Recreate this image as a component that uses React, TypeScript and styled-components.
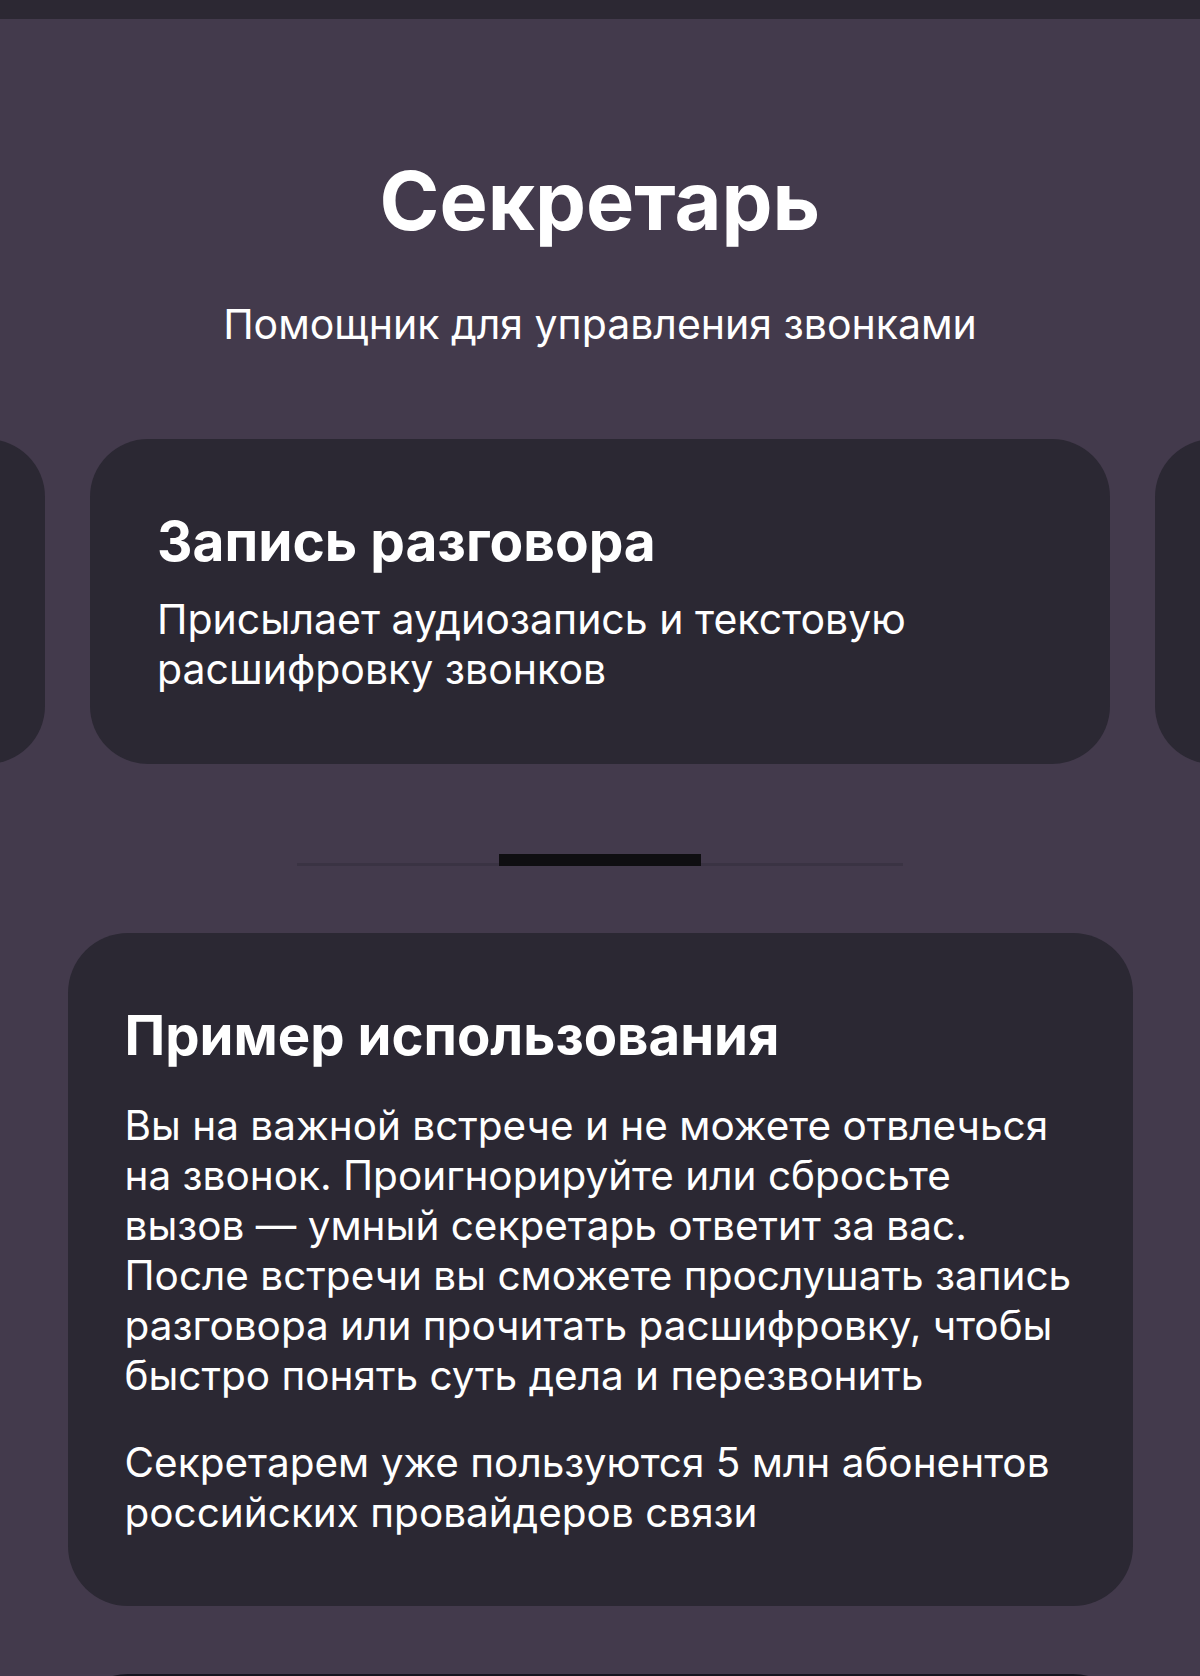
import React from "react";
import styled, { createGlobalStyle } from "styled-components";

const COLORS = {
  page: "#433a4c",
  topBar: "#2c2833",
  card: "#2b2833",
  nextCard: "#15141f",
  track: "#3a3343",
  thumb: "#0f0e11",
  text: "#ffffff",
};

const GlobalStyle = createGlobalStyle`
  html, body {
    margin: 0;
    padding: 0;
    background: ${COLORS.page};
  }
  body {
    font-family: "Inter", "Noto Sans", "Liberation Sans", sans-serif;
    color: ${COLORS.text};
    -webkit-font-smoothing: antialiased;
  }
`;

/* Page */
const Page = styled.div`
  width: 1200px;
  height: 1676px;
  overflow: hidden;
  background: ${COLORS.page};
  display: flex;
  flex-direction: column;
  align-items: center;

  & > * {
    flex-shrink: 0;
  }
`;

const TopBar = styled.div`
  width: 100%;
  height: 19px;
  background: ${COLORS.topBar};
`;

/* Header */
const Header = styled.header`
  display: flex;
  flex-direction: column;
  align-items: center;
  padding-top: 134px;
`;

const Title = styled.h1`
  margin: 0;
  font-size: 81px;
  line-height: 96px;
  font-weight: 700;
`;

const Subtitle = styled.p`
  margin: 51px 0 0;
  font-size: 41px;
  line-height: 48px;
  font-weight: 400;
`;

/* Carousel */
const Carousel = styled.section`
  width: 100%;
  margin-top: 91px;
  display: flex;
  justify-content: center;
  gap: 45px;
  overflow: hidden;
`;

const Slide = styled.div`
  flex: 0 0 1020px;
  height: 325px;
  box-sizing: border-box;
  padding: 70px 70px 0 67px;
  border-radius: 58px;
  background: ${COLORS.card};
`;

const CardTitle = styled.h2<{ $size?: number }>`
  margin: 0;
  font-size: ${(p) => p.$size ?? 55}px;
  line-height: 64px;
  font-weight: 700;
`;

const CardText = styled.p<{ $gap?: number; $size?: number }>`
  margin: ${(p) => p.$gap ?? 21}px 0 0;
  font-size: ${(p) => p.$size ?? 41}px;
  line-height: 50px;
  font-weight: 400;
`;

/* Pager */
const Pager = styled.div`
  margin-top: 90px;
  width: 606px;
  height: 12px;
  display: flex;
  justify-content: center;
  align-items: flex-end;
  background: linear-gradient(${COLORS.track}, ${COLORS.track}) bottom / 100% 3px no-repeat;
`;

const PagerThumb = styled.div`
  width: 202px;
  height: 12px;
  background: ${COLORS.thumb};
`;

/* Example block */
const InfoCard = styled.section`
  margin-top: 67px;
  width: 1065px;
  box-sizing: border-box;
  padding: 70px 59px 68px 57px;
  border-radius: 60px;
  background: ${COLORS.card};
`;

const NextCard = styled.div`
  margin-top: 68px;
  width: 1065px;
  height: 120px;
  border-radius: 60px;
  background: ${COLORS.nextCard};
`;

const slides = [
  { title: "", text: [] as string[] },
  {
    title: "Запись разговора",
    text: ["Присылает аудиозапись и текстовую", "расшифровку звонков"],
  },
  { title: "", text: [] as string[] },
];

const Lines = ({ lines }: { lines: string[] }) => (
  <>
    {lines.map((line, i) => (
      <React.Fragment key={i}>
        {line}
        {i < lines.length - 1 && <br />}
      </React.Fragment>
    ))}
  </>
);

export default function App() {
  return (
    <>
      <GlobalStyle />
      <Page>
        <TopBar />
        <Header>
          <Title>Секретарь</Title>
          <Subtitle>Помощник для управления звонками</Subtitle>
        </Header>

        <Carousel>
          {slides.map((s, i) => (
            <Slide key={i}>
              {s.title && <CardTitle>{s.title}</CardTitle>}
              {s.text.length > 0 && (
                <CardText>
                  <Lines lines={s.text} />
                </CardText>
              )}
            </Slide>
          ))}
        </Carousel>

        <Pager>
          <PagerThumb />
        </Pager>

        <InfoCard>
          <CardTitle $size={54.5}>Пример использования</CardTitle>
          <CardText $gap={34} $size={40.5}>
            <Lines
              lines={[
                "Вы на важной встрече и не можете отвлечься",
                "на звонок. Проигнорируйте или сбросьте",
                "вызов — умный секретарь ответит за вас.",
                "После встречи вы сможете прослушать запись",
                "разговора или прочитать расшифровку, чтобы",
                "быстро понять суть дела и перезвонить",
              ]}
            />
          </CardText>
          <CardText $gap={37} $size={40.5}>
            <Lines
              lines={[
                "Секретарем уже пользуются 5 млн абонентов",
                "российских провайдеров связи",
              ]}
            />
          </CardText>
        </InfoCard>

        <NextCard />
      </Page>
    </>
  );
}
